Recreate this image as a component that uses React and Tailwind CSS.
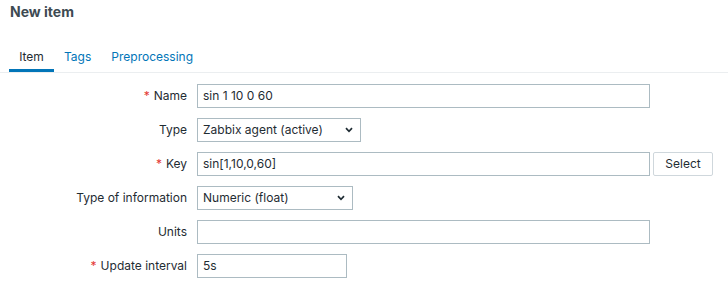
export default function App() {
  const Chevron = () => (
    <svg width="8" height="6" viewBox="0 0 8 6" className="shrink-0">
      <path d="M1 1.2 L4 4.3 L7 1.2" fill="none" stroke="#1f2c33" strokeWidth="1.7" />
    </svg>
  );
  const Label = ({ req, children }) => (
    <div className="w-[187px] shrink-0 text-right text-[12px] leading-[24px] text-[#1f2c33]">
      {req && <span className="text-[#e33734] mr-[4px]">*</span>}
      {children}
    </div>
  );
  const inputCls =
    "h-[24px] border border-[#acbbc2] bg-white px-[5px] text-[12px] leading-[22px] text-[#1f2c33] flex items-center";
  return (
    <div className="w-[728px] h-[290px] bg-white overflow-hidden" style={{ fontFamily: "Inter, 'Liberation Sans', sans-serif" }}>
      <div className="pl-[10px] pt-[2px] h-[24px] text-[14px] font-bold text-[#3d4a52] leading-[20px]">New item</div>
      <div className="mt-[24px] flex border-b border-[#ebeef0] text-[12px]">
        <div className="ml-[9px] w-[45px] h-[24px] flex items-start justify-center text-[#1f2c33] border-b-[3px] border-[#0275b8] -mb-px">Item</div>
        <div className="ml-[10px] h-[24px] text-[#0275b8]">Tags</div>
        <div className="ml-[20px] h-[24px] text-[#0275b8]">Preprocessing</div>
      </div>
      <div className="mt-[11px] flex flex-col gap-[10px]">
        <div className="flex gap-[10px]">
          <Label req>Name</Label>
          <div className={`${inputCls} w-[453px]`}>sin 1 10 0 60</div>
        </div>
        <div className="flex gap-[10px]">
          <Label>Type</Label>
          <div className={`${inputCls} w-[164px] justify-between pr-[7px]`}>
            <span>Zabbix agent (active)</span>
            <Chevron />
          </div>
        </div>
        <div className="flex gap-[10px]">
          <Label req>Key</Label>
          <div className={`${inputCls} w-[453px]`}>sin[1,10,0,60]</div>
          <div className="-ml-[7px] h-[24px] w-[60px] border border-[#cfd7dc] rounded-[2px] bg-white text-[12px] text-[#1f2c33] flex items-center justify-center">Select</div>
        </div>
        <div className="flex gap-[10px]">
          <Label>Type of information</Label>
          <div className={`${inputCls} w-[156px] justify-between pr-[7px]`}>
            <span>Numeric (float)</span>
            <Chevron />
          </div>
        </div>
        <div className="flex gap-[10px]">
          <Label>Units</Label>
          <div className={`${inputCls} w-[453px]`}></div>
        </div>
        <div className="flex gap-[10px]">
          <Label req>Update interval</Label>
          <div className={`${inputCls} w-[150px]`}>5s</div>
        </div>
      </div>
    </div>
  );
}
